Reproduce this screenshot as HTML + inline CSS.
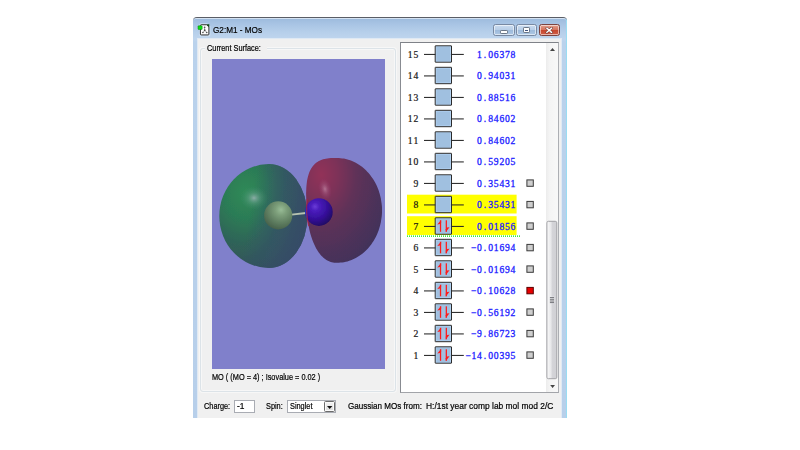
<!DOCTYPE html>
<html><head><meta charset="utf-8"><title>G2:M1 - MOs</title>
<style>
html,body{margin:0;padding:0;background:#fff;}
body{width:800px;height:450px;position:relative;overflow:hidden;font-family:"Liberation Sans",sans-serif;font-size:9px;color:#000;}
.abs,.win *,.ln,.bx,.bx svg,.nm,.en,.hl,.sq{position:absolute;box-sizing:border-box;}
.win{position:absolute;left:192.5px;top:17px;width:374.5px;height:399.7px;border-top:1px solid #5a5e66;border-radius:4px 4px 0 0;background:linear-gradient(#9cbadc 0,#a8c4e4 6px,#b6cfea 14px,#bfd5ee 21px,#bad2ec 24px,#b7cfea 100%);overflow:hidden;}
.win::before{content:"";position:absolute;left:0;top:0;right:0;bottom:0;border-top:1px solid #d4e2f2;border-right:1.4px solid #9adcf2;border-radius:3px 3px 0 0;}
.client{left:4.5px;top:20.3px;width:364.8px;height:381px;background:#f0f0f0;border:1px solid #dfe9f4;border-bottom:none;}
.title{left:20px;top:6px;font-size:9.5px;white-space:nowrap;color:#000;line-height:12px;}
.btn{top:6.2px;height:11.6px;border:1px solid #7889a2;border-radius:2.5px;background:linear-gradient(#cbdcf0 0,#b9cfe8 45%,#9dbadb 50%,#aec8e5 100%);box-shadow:inset 0 0 0 1px rgba(255,255,255,.55);}
.btn.close{background:linear-gradient(#e3a08e 0,#d67660 45%,#c5452c 50%,#d0604a 100%);border-color:#7c4440;}
.grp{border:1px solid #dce3e8;border-radius:3px;box-shadow:0 0 0 1px #f7f7f7,inset 0 0 0 1px #f7f7f7;}
.lbl{white-space:nowrap;line-height:11px;}
.list{left:400px;top:42px;width:159px;height:351px;background:#fff;border:1px solid;border-color:#7f8288 #acaeb3 #a2a4a9 #888b91;}
.ln{left:424px;width:40px;height:1px;background:#222;}
.bx{left:434.5px;width:18px;height:18px;border:1px solid #111;background:#a0c0e0;}
.bx svg{left:0;top:0}
.nm{left:400px;width:18.5px;text-align:right;font-family:"Liberation Mono",monospace;font-size:9px;line-height:12px;}
.en{left:440px;width:75.5px;text-align:right;font-family:"Liberation Mono",monospace;font-size:9px;line-height:12px;color:#1414f0;white-space:nowrap}
.hl{left:407px;width:110px;height:19px;background:#ffff00;}
.sq{left:526.5px;width:7px;height:7px;border:1px solid #333;background:#c8c8c8;}
.sq.rd{background:#e00000;border-color:#700}
</style></head><body>
<div class="win">
  <div class="title" style="transform:scaleX(.86);transform-origin:0 0;-webkit-text-stroke:.2px #000">G2:M1 - MOs</div>
  <svg style="left:4.6px;top:5.1px" width="15" height="14.7" viewBox="0 0 15 15" preserveAspectRatio="none">
    <path d="M4.2 1.3h5.6l2.6 2.4v8.2a.9.9 0 0 1-.9.9H4.2a.9.9 0 0 1-.9-.9V2.2a.9.9 0 0 1 .9-.9z" fill="none" stroke="#dceaf8" stroke-width="2" opacity=".7"/>
    <path d="M4.2 1.8h5.4l2.3 2.2v7.4a.8.8 0 0 1-.8.8H4.2a.8.8 0 0 1-.8-.8V2.6a.8.8 0 0 1 .8-.8z" fill="#fdfdfd" stroke="#2a2a2a" stroke-width="1"/>
    <path d="M9.4 1.4l2.9 2.8V1.4z" fill="#0a4a12"/>
    <rect x="1" y="2.9" width="4.2" height="3.7" rx=".6" fill="#08e010" stroke="#0a7a10" stroke-width=".5"/>
    <path d="M7.6 4.3v3.2M7.7 7.5L5.9 9.6M7.7 7.5L9.7 9.6" stroke="#aaa" stroke-width=".9" fill="none"/>
    <circle cx="7.6" cy="4.4" r=".85" fill="#555"/><circle cx="7.7" cy="7.4" r=".9" fill="#444"/><circle cx="5.9" cy="9.7" r=".85" fill="#555"/><circle cx="9.7" cy="9.7" r=".85" fill="#555"/>
  </svg>
  <div class="btn" style="left:300.5px;width:21.5px"></div>
  <div class="btn" style="left:323.7px;width:21.2px"></div>
  <div class="btn close" style="left:346.2px;width:21.5px"></div>
  <div style="left:307.7px;top:12px;width:7.6px;height:3.6px;background:#fff;border:1px solid #6a7686;border-radius:1.2px"></div>
  <div style="left:330.3px;top:9.3px;width:7.6px;height:5.9px;background:#fff;border:1px solid #6a7686;border-radius:1.2px"></div>
  <div style="left:332.6px;top:11.6px;width:3px;height:1.8px;background:#3f5482;"></div>
  <svg style="left:352.3px;top:9px" width="8.4" height="6.5" viewBox="0 0 9 7"><path d="M2 1.2L7 5.8M7 1.2L2 5.8" stroke="#6a3a36" stroke-width="2.6" stroke-linecap="square"/><path d="M2 1.2L7 5.8M7 1.2L2 5.8" stroke="#fff" stroke-width="1.5" stroke-linecap="square"/></svg>
  <div class="client"></div>
</div>

<!-- page-absolute content -->
<div class="abs grp" style="left:200.1px;top:47.8px;width:196.2px;height:344.2px"></div>
<div class="abs" style="left:205px;top:44px;width:62px;height:8px;background:#f0f0f0"></div><div class="abs lbl" style="left:207px;top:43.4px;font-size:9.3px;transform:scaleX(0.79);transform-origin:0 0;color:#000;-webkit-text-stroke:.22px #000;">Current Surface:</div>
<div class="abs" style="left:212px;top:59px;width:173.2px;height:310px;background:#8080cb;overflow:hidden">
<svg class="abs" style="left:0;top:0" width="174" height="309" viewBox="212 59 174 309">
 <defs>
  <radialGradient id="gl" cx="0.3" cy="0.28" r="0.8"><stop offset="0" stop-color="#2f8a58"/><stop offset=".3" stop-color="#2c7c56"/><stop offset=".6" stop-color="#2f6458"/><stop offset="1" stop-color="#334c5c"/></radialGradient>
  <linearGradient id="gl2" x1="0" y1="0" x2="1" y2="0.2"><stop offset=".42" stop-color="#34506a" stop-opacity="0"/><stop offset=".75" stop-color="#36506a" stop-opacity=".6"/><stop offset="1" stop-color="#364c68" stop-opacity=".85"/></linearGradient>
  <radialGradient id="glh" cx="0.5" cy="0.5" r="0.5"><stop offset="0" stop-color="#9cb4b4" stop-opacity=".85"/><stop offset=".45" stop-color="#64a088" stop-opacity=".45"/><stop offset="1" stop-color="#3c8a66" stop-opacity="0"/></radialGradient>
  <radialGradient id="rl" cx="0.2" cy="0.16" r="0.95"><stop offset="0" stop-color="#923058"/><stop offset=".22" stop-color="#7e3059"/><stop offset=".5" stop-color="#5e3259"/><stop offset="1" stop-color="#40305a"/></radialGradient>
  <radialGradient id="rlh" cx="0.5" cy="0.5" r="0.5"><stop offset="0" stop-color="#c088a4" stop-opacity=".75"/><stop offset=".5" stop-color="#a86084" stop-opacity=".35"/><stop offset="1" stop-color="#a04a6a" stop-opacity="0"/></radialGradient>
  <radialGradient id="gs" cx="0.6" cy="0.3" r="0.8"><stop offset="0" stop-color="#98bc96"/><stop offset=".25" stop-color="#7c9e7a"/><stop offset=".65" stop-color="#5a785c"/><stop offset="1" stop-color="#405844"/></radialGradient>
  <radialGradient id="bs" cx="0.36" cy="0.3" r="0.8"><stop offset="0" stop-color="#6a3cd8"/><stop offset=".2" stop-color="#4a1cbc"/><stop offset=".55" stop-color="#36109c"/><stop offset="1" stop-color="#1c0658"/></radialGradient>
  <filter id="bl" x="-10%" y="-10%" width="120%" height="120%"><feGaussianBlur stdDeviation=".55"/></filter>
  <clipPath id="cpl"><rect x="300" y="190" width="7.2" height="45"/></clipPath>
 </defs>
 <g filter="url(#bl)">
 <path d="M269 164A38.4 52 0 0 1 269 268A49.7 52 0 0 1 269 164Z" fill="url(#gl)"/>
 <path d="M269 164A38.4 52 0 0 1 269 268A49.7 52 0 0 1 269 164Z" fill="url(#gl2)"/>
 <ellipse cx="254" cy="198" rx="14" ry="12" fill="url(#glh)"/>
 <path d="M337.0 158.0L338.8 158.0L340.5 158.2L342.3 158.4L344.0 158.6L345.8 159.0L347.5 159.4L349.2 160.0L350.9 160.6L352.6 161.2L354.2 162.0L355.8 162.8L357.4 163.7L359.0 164.7L360.5 165.7L362.0 166.8L363.5 168.0L364.9 169.2L366.2 170.6L367.5 171.9L368.8 173.3L370.0 174.8L371.2 176.4L372.3 178.0L373.4 179.6L374.4 181.3L375.4 183.0L376.3 184.8L377.1 186.6L377.9 188.5L378.6 190.3L379.2 192.3L379.8 194.2L380.3 196.2L380.8 198.2L381.1 200.2L381.4 202.2L381.7 204.2L381.9 206.3L382.0 208.3L382.0 210.4L382.0 212.5L381.9 214.5L381.7 216.6L381.4 218.6L381.1 220.6L380.8 222.6L380.3 224.6L379.8 226.6L379.2 228.5L378.6 230.5L377.9 232.3L377.1 234.2L376.3 236.0L375.4 237.8L374.4 239.5L373.4 241.2L372.3 242.8L371.2 244.4L370.0 246.0L368.8 247.5L367.5 248.9L366.2 250.2L364.9 251.6L363.5 252.8L362.0 254.0L360.5 255.1L359.0 256.1L357.4 257.1L355.8 258.0L354.2 258.8L352.6 259.6L350.9 260.2L349.2 260.8L347.5 261.4L345.8 261.8L344.0 262.2L342.3 262.4L340.5 262.6L338.8 262.8L337.0 262.8L335.5 262.8L334.2 262.7L333.0 262.5L331.8 262.2L330.7 261.9L329.6 261.5L328.5 261.0L327.4 260.5L326.4 259.9L325.4 259.2L324.4 258.5L323.4 257.7L322.5 256.8L321.6 255.9L320.7 254.9L319.8 253.8L318.9 252.7L318.1 251.5L317.3 250.2L316.5 248.9L315.7 247.5L315.0 246.1L314.3 244.6L313.6 243.1L313.0 241.5L312.3 239.8L311.7 238.1L311.2 236.4L310.6 234.6L310.1 232.7L309.6 230.8L309.2 228.8L308.8 226.8L308.4 224.8L308.0 222.7L307.7 220.5L307.5 218.2L307.2 215.9L307.0 213.3L306.8 210.4L306.5 204.3L306.3 200.8L306.2 197.8L306.1 195.2L306.1 192.8L306.2 190.5L306.3 188.4L306.4 186.4L306.6 184.6L306.8 182.8L307.0 181.1L307.3 179.4L307.6 177.9L308.0 176.4L308.4 175.0L308.9 173.6L309.3 172.3L309.9 171.1L310.4 169.9L311.0 168.8L311.7 167.7L312.4 166.7L313.1 165.8L313.9 164.9L314.7 164.1L315.6 163.3L316.5 162.6L317.4 161.9L318.4 161.3L319.5 160.7L320.6 160.2L321.8 159.7L323.1 159.3L324.4 159.0L325.8 158.7L327.3 158.4L329.0 158.2L330.9 158.1L333.1 158.0Z" fill="url(#rl)"/>
 <ellipse cx="325" cy="189" rx="6.5" ry="11" fill="url(#rlh)" transform="rotate(-12 325 189)"/>
 <path d="M291.5 214.6L306 213" stroke="#b6c2b0" stroke-width="1.8"/>
 <circle cx="278.2" cy="215.4" r="14.1" fill="url(#gs)"/>
 <circle cx="318.9" cy="212.1" r="13.8" fill="url(#bs)"/>
 <circle cx="318.9" cy="212.1" r="13.8" fill="#1c3ad0" clip-path="url(#cpl)" opacity=".8"/>
 <path d="M307.4 199 C306.2 207 306.6 218 308.8 226" stroke="#a82040" stroke-width="1.2" fill="none" opacity=".8"/>
 </g>
</svg>
</div>
<div class="abs lbl" style="left:212.2px;top:371.5px;font-size:9.3px;transform:scaleX(0.79);transform-origin:0 0;color:#000;-webkit-text-stroke:.22px #000;">MO ( (MO = 4) ; Isovalue = 0.02 )</div>

<div class="abs list"></div>
<svg class="abs" style="left:400px;top:42px" width="160" height="352" viewBox="400 42 160 352" font-family="'Liberation Serif',serif" font-size="9.6" text-anchor="middle">
<rect x="424" y="53.90" width="39.8" height="1.05" fill="#262626"/><rect x="435.9" y="46.50" width="14.9" height="15.0" fill="#a0c0e0" stroke="#b4d4f6" stroke-width="1"/><rect x="435.2" y="45.80" width="16.3" height="16.4" rx=".2" fill="none" stroke="#2a2a2a" stroke-width="1"/><text x="410.2 415.8" y="57.80" fill="#151515" stroke="#151515" stroke-width=".2">15</text><text x="479.4 485.0 490.6 496.2 501.8 507.4 513.0" y="57.80" fill="#1c1cff" stroke="#1c1cff" stroke-width=".3">1.06378</text>
<rect x="424" y="75.40" width="39.8" height="1.05" fill="#262626"/><rect x="435.9" y="68.00" width="14.9" height="15.0" fill="#a0c0e0" stroke="#b4d4f6" stroke-width="1"/><rect x="435.2" y="67.30" width="16.3" height="16.4" rx=".2" fill="none" stroke="#2a2a2a" stroke-width="1"/><text x="410.2 415.8" y="79.30" fill="#151515" stroke="#151515" stroke-width=".2">14</text><text x="479.4 485.0 490.6 496.2 501.8 507.4 513.0" y="79.30" fill="#1c1cff" stroke="#1c1cff" stroke-width=".3">0.94031</text>
<rect x="424" y="96.90" width="39.8" height="1.05" fill="#262626"/><rect x="435.9" y="89.50" width="14.9" height="15.0" fill="#a0c0e0" stroke="#b4d4f6" stroke-width="1"/><rect x="435.2" y="88.80" width="16.3" height="16.4" rx=".2" fill="none" stroke="#2a2a2a" stroke-width="1"/><text x="410.2 415.8" y="100.80" fill="#151515" stroke="#151515" stroke-width=".2">13</text><text x="479.4 485.0 490.6 496.2 501.8 507.4 513.0" y="100.80" fill="#1c1cff" stroke="#1c1cff" stroke-width=".3">0.88516</text>
<rect x="424" y="118.40" width="39.8" height="1.05" fill="#262626"/><rect x="435.9" y="111.00" width="14.9" height="15.0" fill="#a0c0e0" stroke="#b4d4f6" stroke-width="1"/><rect x="435.2" y="110.30" width="16.3" height="16.4" rx=".2" fill="none" stroke="#2a2a2a" stroke-width="1"/><text x="410.2 415.8" y="122.30" fill="#151515" stroke="#151515" stroke-width=".2">12</text><text x="479.4 485.0 490.6 496.2 501.8 507.4 513.0" y="122.30" fill="#1c1cff" stroke="#1c1cff" stroke-width=".3">0.84602</text>
<rect x="424" y="139.90" width="39.8" height="1.05" fill="#262626"/><rect x="435.9" y="132.50" width="14.9" height="15.0" fill="#a0c0e0" stroke="#b4d4f6" stroke-width="1"/><rect x="435.2" y="131.80" width="16.3" height="16.4" rx=".2" fill="none" stroke="#2a2a2a" stroke-width="1"/><text x="410.2 415.8" y="143.80" fill="#151515" stroke="#151515" stroke-width=".2">11</text><text x="479.4 485.0 490.6 496.2 501.8 507.4 513.0" y="143.80" fill="#1c1cff" stroke="#1c1cff" stroke-width=".3">0.84602</text>
<rect x="424" y="161.40" width="39.8" height="1.05" fill="#262626"/><rect x="435.9" y="154.00" width="14.9" height="15.0" fill="#a0c0e0" stroke="#b4d4f6" stroke-width="1"/><rect x="435.2" y="153.30" width="16.3" height="16.4" rx=".2" fill="none" stroke="#2a2a2a" stroke-width="1"/><text x="410.2 415.8" y="165.30" fill="#151515" stroke="#151515" stroke-width=".2">10</text><text x="479.4 485.0 490.6 496.2 501.8 507.4 513.0" y="165.30" fill="#1c1cff" stroke="#1c1cff" stroke-width=".3">0.59205</text>
<rect x="424" y="182.90" width="39.8" height="1.05" fill="#262626"/><rect x="435.9" y="175.50" width="14.9" height="15.0" fill="#a0c0e0" stroke="#b4d4f6" stroke-width="1"/><rect x="435.2" y="174.80" width="16.3" height="16.4" rx=".2" fill="none" stroke="#2a2a2a" stroke-width="1"/><text x="415.8" y="186.80" fill="#151515" stroke="#151515" stroke-width=".2">9</text><text x="479.4 485.0 490.6 496.2 501.8 507.4 513.0" y="186.80" fill="#1c1cff" stroke="#1c1cff" stroke-width=".3">0.35431</text><rect x="526.9" y="179.90" width="6.4" height="6.4" fill="#cecece" stroke="#3a3a3a" stroke-width="1"/>
<rect x="407" y="194.70" width="109.6" height="18.8" fill="#ffff00"/><rect x="424" y="204.40" width="39.8" height="1.05" fill="#262626"/><rect x="435.9" y="197.00" width="14.9" height="15.0" fill="#a0c0e0" stroke="#b4d4f6" stroke-width="1"/><rect x="435.2" y="196.30" width="16.3" height="16.4" rx=".2" fill="none" stroke="#2a2a2a" stroke-width="1"/><text x="415.8" y="208.30" fill="#151515" stroke="#151515" stroke-width=".2">8</text><text x="479.4 485.0 490.6 496.2 501.8 507.4 513.0" y="208.30" fill="#1c1cff" stroke="#1c1cff" stroke-width=".3">0.35431</text><rect x="526.9" y="201.40" width="6.4" height="6.4" fill="#cecece" stroke="#3a3a3a" stroke-width="1"/>
<rect x="407" y="216.20" width="109.6" height="18.8" fill="#ffff00"/><rect x="424" y="225.90" width="39.8" height="1.05" fill="#262626"/><rect x="435.9" y="218.50" width="14.9" height="15.0" fill="#a0c0e0" stroke="#b4d4f6" stroke-width="1"/><rect x="435.2" y="217.80" width="16.3" height="16.4" rx=".2" fill="none" stroke="#2a2a2a" stroke-width="1"/><g transform="translate(0 0.00)" fill="#ff1a1a"><rect x="439.9" y="220.3" width="1.25" height="11.5"/><path d="M441.1 219.9L437.3 224.4L440 224.1L441.1 222.6z"/><rect x="445.7" y="220.3" width="1.25" height="11.5"/><path d="M445.8 232L449.5 227.2L446.9 227.6L445.8 229.2z"/></g><text x="415.8" y="229.80" fill="#151515" stroke="#151515" stroke-width=".2">7</text><text x="479.4 485.0 490.6 496.2 501.8 507.4 513.0" y="229.80" fill="#1c1cff" stroke="#1c1cff" stroke-width=".3">0.01856</text><rect x="526.9" y="222.90" width="6.4" height="6.4" fill="#cecece" stroke="#3a3a3a" stroke-width="1"/>
<rect x="424" y="247.40" width="39.8" height="1.05" fill="#262626"/><rect x="435.9" y="240.00" width="14.9" height="15.0" fill="#a0c0e0" stroke="#b4d4f6" stroke-width="1"/><rect x="435.2" y="239.30" width="16.3" height="16.4" rx=".2" fill="none" stroke="#2a2a2a" stroke-width="1"/><g transform="translate(0 21.50)" fill="#ff1a1a"><rect x="439.9" y="220.3" width="1.25" height="11.5"/><path d="M441.1 219.9L437.3 224.4L440 224.1L441.1 222.6z"/><rect x="445.7" y="220.3" width="1.25" height="11.5"/><path d="M445.8 232L449.5 227.2L446.9 227.6L445.8 229.2z"/></g><text x="415.8" y="251.30" fill="#151515" stroke="#151515" stroke-width=".2">6</text><text x="473.8 479.4 485.0 490.6 496.2 501.8 507.4 513.0" y="251.30" fill="#1c1cff" stroke="#1c1cff" stroke-width=".3">&#8722;0.01694</text><rect x="526.9" y="244.40" width="6.4" height="6.4" fill="#cecece" stroke="#3a3a3a" stroke-width="1"/>
<rect x="424" y="268.90" width="39.8" height="1.05" fill="#262626"/><rect x="435.9" y="261.50" width="14.9" height="15.0" fill="#a0c0e0" stroke="#b4d4f6" stroke-width="1"/><rect x="435.2" y="260.80" width="16.3" height="16.4" rx=".2" fill="none" stroke="#2a2a2a" stroke-width="1"/><g transform="translate(0 43.00)" fill="#ff1a1a"><rect x="439.9" y="220.3" width="1.25" height="11.5"/><path d="M441.1 219.9L437.3 224.4L440 224.1L441.1 222.6z"/><rect x="445.7" y="220.3" width="1.25" height="11.5"/><path d="M445.8 232L449.5 227.2L446.9 227.6L445.8 229.2z"/></g><text x="415.8" y="272.80" fill="#151515" stroke="#151515" stroke-width=".2">5</text><text x="473.8 479.4 485.0 490.6 496.2 501.8 507.4 513.0" y="272.80" fill="#1c1cff" stroke="#1c1cff" stroke-width=".3">&#8722;0.01694</text><rect x="526.9" y="265.90" width="6.4" height="6.4" fill="#cecece" stroke="#3a3a3a" stroke-width="1"/>
<rect x="424" y="290.40" width="39.8" height="1.05" fill="#262626"/><rect x="435.9" y="283.00" width="14.9" height="15.0" fill="#a0c0e0" stroke="#b4d4f6" stroke-width="1"/><rect x="435.2" y="282.30" width="16.3" height="16.4" rx=".2" fill="none" stroke="#2a2a2a" stroke-width="1"/><g transform="translate(0 64.50)" fill="#ff1a1a"><rect x="439.9" y="220.3" width="1.25" height="11.5"/><path d="M441.1 219.9L437.3 224.4L440 224.1L441.1 222.6z"/><rect x="445.7" y="220.3" width="1.25" height="11.5"/><path d="M445.8 232L449.5 227.2L446.9 227.6L445.8 229.2z"/></g><text x="415.8" y="294.30" fill="#151515" stroke="#151515" stroke-width=".2">4</text><text x="473.8 479.4 485.0 490.6 496.2 501.8 507.4 513.0" y="294.30" fill="#1c1cff" stroke="#1c1cff" stroke-width=".3">&#8722;0.10628</text><rect x="526.9" y="287.40" width="6.4" height="6.4" fill="#e80000" stroke="#5a0000" stroke-width="1"/>
<rect x="424" y="311.90" width="39.8" height="1.05" fill="#262626"/><rect x="435.9" y="304.50" width="14.9" height="15.0" fill="#a0c0e0" stroke="#b4d4f6" stroke-width="1"/><rect x="435.2" y="303.80" width="16.3" height="16.4" rx=".2" fill="none" stroke="#2a2a2a" stroke-width="1"/><g transform="translate(0 86.00)" fill="#ff1a1a"><rect x="439.9" y="220.3" width="1.25" height="11.5"/><path d="M441.1 219.9L437.3 224.4L440 224.1L441.1 222.6z"/><rect x="445.7" y="220.3" width="1.25" height="11.5"/><path d="M445.8 232L449.5 227.2L446.9 227.6L445.8 229.2z"/></g><text x="415.8" y="315.80" fill="#151515" stroke="#151515" stroke-width=".2">3</text><text x="473.8 479.4 485.0 490.6 496.2 501.8 507.4 513.0" y="315.80" fill="#1c1cff" stroke="#1c1cff" stroke-width=".3">&#8722;0.56192</text><rect x="526.9" y="308.90" width="6.4" height="6.4" fill="#cecece" stroke="#3a3a3a" stroke-width="1"/>
<rect x="424" y="333.40" width="39.8" height="1.05" fill="#262626"/><rect x="435.9" y="326.00" width="14.9" height="15.0" fill="#a0c0e0" stroke="#b4d4f6" stroke-width="1"/><rect x="435.2" y="325.30" width="16.3" height="16.4" rx=".2" fill="none" stroke="#2a2a2a" stroke-width="1"/><g transform="translate(0 107.50)" fill="#ff1a1a"><rect x="439.9" y="220.3" width="1.25" height="11.5"/><path d="M441.1 219.9L437.3 224.4L440 224.1L441.1 222.6z"/><rect x="445.7" y="220.3" width="1.25" height="11.5"/><path d="M445.8 232L449.5 227.2L446.9 227.6L445.8 229.2z"/></g><text x="415.8" y="337.30" fill="#151515" stroke="#151515" stroke-width=".2">2</text><text x="473.8 479.4 485.0 490.6 496.2 501.8 507.4 513.0" y="337.30" fill="#1c1cff" stroke="#1c1cff" stroke-width=".3">&#8722;9.86723</text><rect x="526.9" y="330.40" width="6.4" height="6.4" fill="#cecece" stroke="#3a3a3a" stroke-width="1"/>
<rect x="424" y="354.90" width="39.8" height="1.05" fill="#262626"/><rect x="435.9" y="347.50" width="14.9" height="15.0" fill="#a0c0e0" stroke="#b4d4f6" stroke-width="1"/><rect x="435.2" y="346.80" width="16.3" height="16.4" rx=".2" fill="none" stroke="#2a2a2a" stroke-width="1"/><g transform="translate(0 129.00)" fill="#ff1a1a"><rect x="439.9" y="220.3" width="1.25" height="11.5"/><path d="M441.1 219.9L437.3 224.4L440 224.1L441.1 222.6z"/><rect x="445.7" y="220.3" width="1.25" height="11.5"/><path d="M445.8 232L449.5 227.2L446.9 227.6L445.8 229.2z"/></g><text x="415.8" y="358.80" fill="#151515" stroke="#151515" stroke-width=".2">1</text><text x="468.2 473.8 479.4 485.0 490.6 496.2 501.8 507.4 513.0" y="358.80" fill="#1c1cff" stroke="#1c1cff" stroke-width=".3">&#8722;14.00395</text><rect x="526.9" y="351.90" width="6.4" height="6.4" fill="#cecece" stroke="#3a3a3a" stroke-width="1"/>
<path d="M407 236.2H520" stroke="#00e800" stroke-width="1.3" stroke-dasharray="1 1"/>
</svg>


<!-- scrollbar -->
<div class="abs" style="left:546.3px;top:43px;width:11.7px;height:349px;background:linear-gradient(90deg,#ececec,#f4f4f4 30%,#f8f8f8);"></div>
<svg class="abs" style="left:549.9px;top:47.9px" width="5" height="3" viewBox="0 0 5 3"><path d="M0 3L2.5 0L5 3z" fill="#444"/></svg>
<svg class="abs" style="left:549.8px;top:385px" width="5.2" height="2.9" viewBox="0 0 5 3"><path d="M0 0L2.5 3L5 0z" fill="#444"/></svg>
<svg class="abs" style="left:545px;top:219px" width="14" height="163" viewBox="545 219 14 163"><defs><linearGradient id="th" x1="0" x2="1" y1="0" y2="0"><stop offset="0" stop-color="#fbfbfb"/><stop offset=".4" stop-color="#e8e8ea"/><stop offset=".55" stop-color="#d4d4d8"/><stop offset="1" stop-color="#d0d0d4"/></linearGradient></defs><rect x="546.9" y="221.3" width="9.9" height="157.4" rx="1.5" fill="url(#th)" stroke="#a2a2a6" stroke-width="1"/><rect x="549.4" y="296.6" width="5.2" height="6.8" fill="#f4f4f6" opacity=".7"/><path d="M549.9 297.6h4.2M549.9 299.3h4.2M549.9 301h4.2M549.9 302.6h4.2" stroke="#5c5d62" stroke-width=".85"/></svg>

<!-- bottom controls -->
<div class="abs lbl" style="left:204px;top:400.5px;font-size:9.3px;transform:scaleX(0.79);transform-origin:0 0;color:#000;-webkit-text-stroke:.22px #000;">Charge:</div>
<div class="abs" style="left:234.3px;top:400px;width:20.7px;height:12.8px;background:#fff;border:1px solid #a9acb3;"></div>
<div class="abs lbl" style="left:237px;top:401px;font-size:9.3px;transform:scaleX(0.9);transform-origin:0 0;color:#000;-webkit-text-stroke:.22px #000;">-1</div>
<div class="abs lbl" style="left:266px;top:400.5px;font-size:9.3px;transform:scaleX(0.79);transform-origin:0 0;color:#000;-webkit-text-stroke:.22px #000;">Spin:</div>
<div class="abs" style="left:287px;top:400px;width:49px;height:12.8px;background:#fff;border:1px solid #a9acb3;"></div>
<div class="abs lbl" style="left:290.3px;top:400.6px;font-size:9.3px;transform:scaleX(0.79);transform-origin:0 0;color:#000;-webkit-text-stroke:.22px #000;">Singlet</div>
<div class="abs" style="left:324.4px;top:401.3px;width:10.8px;height:10.6px;background:linear-gradient(#f4f4f4,#dcdcdc);border:1px solid #6c6c6c;border-radius:1.5px;box-shadow:inset 0 0 0 1px #fafafa"></div>
<svg class="abs" style="left:327.3px;top:405.6px" width="5.4" height="3" viewBox="0 0 5.4 3"><path d="M0 0L2.7 3L5.4 0z" fill="#111"/></svg>
<div class="abs lbl" style="left:347.7px;top:400px;font-size:9.6px;transform:scaleX(0.841);transform-origin:0 0;color:#000;-webkit-text-stroke:.22px #000;">Gaussian MOs from:</div><div class="abs lbl" style="left:425.8px;top:400px;font-size:9.6px;transform:scaleX(0.878);transform-origin:0 0;color:#000;-webkit-text-stroke:.22px #000;">H:/1st year comp lab mol mod 2/C</div>
</body></html>
